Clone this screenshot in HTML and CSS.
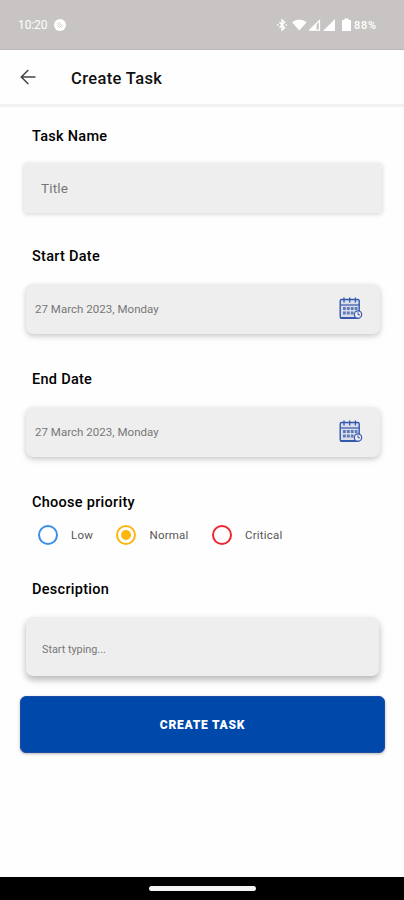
FILE: index.html
```html
<!DOCTYPE html>
<html lang="en">
<head>
<meta charset="utf-8">
<title>Create Task</title>
<link rel="stylesheet" href="styles.css">
</head>
<body>
<div class="status">
  <span class="time">10:20</span>
  <svg class="notif" width="12" height="12" viewBox="0 0 12 12"><circle cx="6" cy="6" r="6" fill="#fff"/><path d="M3.2 4.2l4.6 4.6M4.5 3l4.3 4.4M3 6.5L5.5 9" stroke="#c8c4c3" stroke-width=".9" fill="none"/></svg>
  <svg class="system" width="76" height="16" viewBox="0 0 76 16" fill="#fff">
    <path d="M3.4 5.2l5.2 5.4L6 13V3l2.6 2.400-5.200 5.400" fill="none" stroke="#fff" stroke-width="1.400"/>
    <path d="M1 7.2h1.400v1.500H1zM9.600 7.200H11v1.500H9.600z"/>
    <path d="M16 5.200Q23.300 -.2 30.700 5.200L23.300 13.500z"/>
    <path d="M43.500 3.500V13.200H34z" fill="none" stroke="#fff" stroke-width="1.200"/><path d="M40.500 5.800V13H33z"/>
    <path d="M59 2V14H47z"/>
    <path d="M66 3h2.500V1.500h4V3H75v11h-9z"/>
  </svg>
  <span class="percent">88%</span>
</div>
<header class="appbar">
  <svg width="16" height="16" viewBox="0 0 16 16" fill="none" stroke="#444" stroke-width="1.500"><path d="M8.300 1L1.300 8l7 7M1.500 8H15.500"/></svg>
  <h1>Create Task</h1>
</header>
<main>
  <label class="label name">Task Name</label>
  <div class="field title"><span>Title</span></div>
  <label class="label start">Start Date</label>
  <div class="field date"><span>27 March 2023, Monday</span>
    <svg width="24" height="24" viewBox="0 0 24 24"><use href="#cal"/></svg></div>
  <label class="label end">End Date</label>
  <div class="field date"><span>27 March 2023, Monday</span>
    <svg width="24" height="24" viewBox="0 0 24 24"><use href="#cal"/></svg></div>
  <label class="label priority">Choose priority</label>
  <div class="options">
    <i class="radio low"></i><span class="t-low">Low</span>
    <i class="radio normal"></i><span class="t-normal">Normal</span>
    <i class="radio critical"></i><span class="t-critical">Critical</span>
  </div>
  <label class="label desc">Description</label>
  <div class="field description"><span>Start typing...</span></div>
  <button class="submit"><span>CREATE TASK</span></button>
</main>
<footer><i class="pill"></i></footer>
<svg class="defs" width="0" height="0">
  <symbol id="cal" viewBox="0 0 24 24">
    <g fill="none" stroke="#3558ae">
      <rect x="1.200" y="2.500" width="19" height="18.700" rx="1.500" fill="#3558ae" fill-opacity=".1" stroke-width="1.400"/>
      <path d="M1.500 21h15" stroke-width="2"/>
      <path d="M2 8h18" stroke-width="1.200"/>
      <path d="M5 .5v5M10.700 .5v5M16.400 .5v5" stroke-width="1.300"/>
      <path d="M4 11.500h14.500M4 16h10.500" stroke-width="3" stroke-dasharray="2.800 1.100" opacity=".75"/>
      <circle cx="19" cy="17.500" r="3.700" fill="#eee" stroke-width="1.200"/>
      <path d="M19 15.200v2.600h2" stroke-width="1"/>
    </g>
  </symbol>
</svg>
</body>
</html>
```
FILE: styles.css
```css
* { box-sizing: border-box; }
body {
  margin: 0;
  height: 900px;
  display: flex;
  flex-direction: column;
  overflow: hidden;
  background: #fefefe;
  font-family: Roboto, "Liberation Sans", sans-serif;
  color: #111;
}
.status {
  flex: none;
  height: 50px;
  padding: 1px 26px 0 18px;
  display: flex;
  align-items: center;
  background: #c8c4c3;
  border-bottom: 1px solid #b9b6b5;
  color: #fff;
}
.time { width: 36px; font-size: 12px; letter-spacing: -.1px; }
.system { margin-left: auto; margin-right: 2px; }
.percent { width: 24px; font-size: 11px; font-weight: 500; letter-spacing: .7px; white-space: nowrap; }
.appbar {
  flex: none;
  height: 57px;
  padding-left: 20px;
  display: flex;
  align-items: center;
  gap: 35px;
  border-bottom: 3px solid #f1f1f1;
}
h1 { margin: 0; padding-top: 3px; font-size: 16.500px; font-weight: 500; line-height: 20px; letter-spacing: .37px; }
main { flex: 1; display: flex; flex-direction: column; }
.label { margin-left: 32px; font-size: 14.500px; font-weight: 500; line-height: 18px; letter-spacing: .28px; color: #000; }
.name { margin-top: 21px; }
.field {
  flex: none;
  display: flex;
  align-items: center;
  justify-content: space-between;
  background: #eee;
  color: #777;
  box-shadow: 0 2px 5px rgba(0,0,0,.17), 0 3px 10px rgba(0,0,0,.06);
}
.title { margin: 17px 22px 0 24px; height: 50px; padding: 0 17px 1px; border-radius: 3px; font-size: 13.500px; letter-spacing: .2px; box-shadow: 0 1px 5px rgba(0,0,0,.18); }
.start { margin-top: 35px; }
.date { margin: 18px 24px 0 26px; height: 50px; padding: 0 17px 0 9px; border-radius: 7px; font-size: 11.500px; letter-spacing: .03px; }
.end { margin-top: 37px; }
.priority { margin-top: 37px; }
.options { height: 20px; margin: 13px 0 0 38px; display: flex; align-items: center; font-size: 11.500px; color: #555; letter-spacing: .2px; }
.radio { flex: none; width: 20px; height: 20px; border: 2px solid; border-radius: 50%; }
.low { color: #3d8eea; }
.normal { color: #fbb710; display: grid; place-items: center; }
.normal::after { content: ""; width: 10px; height: 10px; border-radius: 50%; background: #fbb710; }
.critical { color: #ee2430; }
.t-low { width: 45px; margin-left: 13px; }
.t-normal { width: 62px; margin-left: 13.500px; }
.t-critical { margin-left: 13.500px; }
.desc { margin-top: 36px; }
.description { margin: 18px 25px 0 26px; height: 59px; padding: 5px 16px 0; border-radius: 7px; font-size: 10.800px; box-shadow: 0 4px 6px rgba(0,0,0,.22), 0 3px 10px rgba(0,0,0,.08); }
.submit {
  flex: none;
  height: 57px;
  margin: 20px 19px 0 20px;
  padding: 0;
  border: 1px solid #1c4ca8;
  border-radius: 6px;
  background: #0049ab;
  color: #fff;
  font-family: inherit;
  font-size: 12px;
  font-weight: 900;
  letter-spacing: .75px;
  box-shadow: 0 1px 3px rgba(0,0,0,.3);
}
footer { flex: none; height: 23px; background: #000; display: flex; justify-content: center; padding-top: 9px; }
.pill { width: 107px; height: 5px; border-radius: 3px; background: #f4f4f4; }
.defs { position: absolute; }
```
